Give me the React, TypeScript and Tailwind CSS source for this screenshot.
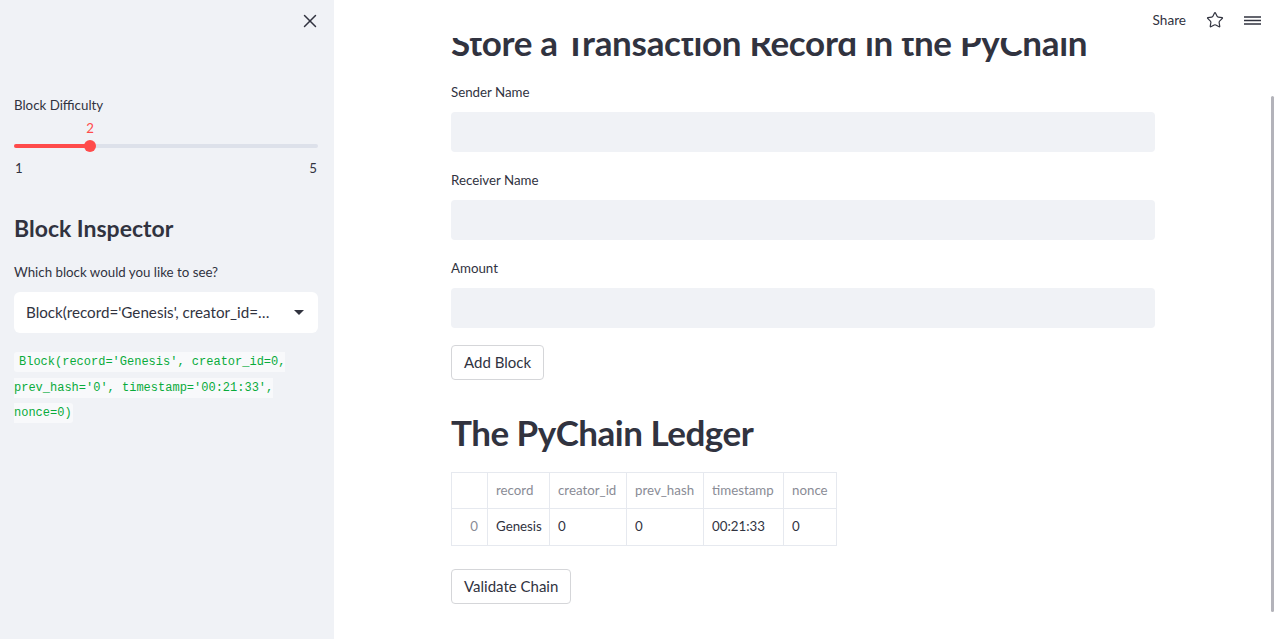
import { X, Star } from 'lucide-react';

const COLUMNS = [
  { key: 'record', w: 'w-[62px]' },
  { key: 'creator_id', w: 'w-[77px]' },
  { key: 'prev_hash', w: 'w-[77px]' },
  { key: 'timestamp', w: 'w-[80px]' },
  { key: 'nonce', w: 'w-[52px]' },
];

const ROW: Record<string, string> = {
  record: 'Genesis',
  creator_id: '0',
  prev_hash: '0',
  timestamp: '00:21:33',
  nonce: '0',
};

const TextField = ({ label }: { label: string }) => (
  <div className="flex flex-col">
    <label className="text-[13.3px] leading-5 text-[#31333f]">{label}</label>
    <div className="mt-[10px] h-10 w-full rounded-[4px] bg-[#f0f2f6]" />
  </div>
);

const Sidebar = () => (
  <aside className="w-[334px] shrink-0 bg-[#f0f2f6] pl-[14px] pr-4">
    {/* close */}
    <div className="flex h-[42px] items-center justify-end pr-0">
      <X size={22} strokeWidth={1.6} className="mr-[-3px] text-[#31333f]" />
    </div>

    {/* Block difficulty slider */}
    <div className="mt-[53px] text-[13.3px] leading-5 text-[#31333f]">Block Difficulty</div>
    <div className="relative mt-[29px] h-1 w-full rounded-full bg-[#dde1ea]">
      <div className="h-1 w-[76px] rounded-full bg-[#ff4b4b]" />
      <span className="absolute left-[70px] top-[-26px] w-3 text-center text-[13.3px] leading-5 text-[#ff4b4b]">2</span>
      <span className="absolute left-[70px] top-[-4px] h-3 w-3 rounded-full bg-[#ff4b4b]" />
    </div>
    <div className="mt-[10px] flex justify-between px-[1px] text-[13.3px] leading-5 text-[#31333f]">
      <span>1</span>
      <span>5</span>
    </div>

    {/* Block inspector */}
    <h2 className="mt-[36px] text-[23px] font-bold leading-[28px] text-[#31333f]">Block Inspector</h2>
    <div className="mt-[20px] text-[13.3px] leading-5 text-[#31333f]">Which block would you like to see?</div>
    <div className="mt-[10px] flex h-[41px] items-center justify-between rounded-[6px] bg-white pl-3 pr-[14px]">
      <span className="truncate text-[15.2px] text-[#31333f]">Block(record='Genesis', creator_id=0, prev_hash='0', timestamp='00:21:33', nonce=0)</span>
      <svg width="10" height="5" viewBox="0 0 10 5" className="ml-[18px] shrink-0">
        <path d="M0 0h10L5 5z" fill="#31333f" />
      </svg>
    </div>
    <p className="mt-[17px] font-['Liberation_Mono',monospace] text-[12px] leading-[25.5px]">
      <code className="rounded-[3px] bg-[#f8f9fb] py-[3px] pl-[5px] pr-[1px] text-[#09ab3b]">
        Block(record='Genesis', creator_id=0, prev_hash='0', timestamp='00:21:33', nonce=0)
      </code>
    </p>
  </aside>
);

const Ledger = () => (
  <div className="flex w-[386px] flex-col border border-[#e6e9ef] text-[13.3px]">
    <div className="flex h-[36px] border-b border-[#e6e9ef]">
      <div className="w-[36px] border-r border-[#e6e9ef]" />
      {COLUMNS.map((c) => (
        <div key={c.key} className={`${c.w} flex items-center border-r border-[#e6e9ef] px-2 text-[#8a8c96] last:border-r-0`}>
          {c.key}
        </div>
      ))}
    </div>
    <div className="flex h-[36px]">
      <div className="flex w-[36px] items-center justify-end border-r border-[#e6e9ef] pr-[9px] text-[#8a8c96]">0</div>
      {COLUMNS.map((c) => (
        <div key={c.key} className={`${c.w} flex items-center border-r border-[#e6e9ef] px-2 text-[#31333f] last:border-r-0`}>
          {ROW[c.key]}
        </div>
      ))}
    </div>
  </div>
);

const Button = ({ children }: { children: string }) => (
  <button className="h-[35px] rounded-[4px] border border-[#d5d6d9] bg-white px-3 text-[15px] text-[#31333f]">
    {children}
  </button>
);

export default function App() {
  return (
    <div className="flex h-[639px] w-[1275px] overflow-hidden bg-white font-['Lato',sans-serif] text-[#31333f]">
      <Sidebar />

      <main className="relative flex-1 overflow-hidden">
        {/* top bar */}
        <header className="absolute inset-x-0 top-0 z-10 flex h-[38px] items-center justify-end gap-[20px] bg-white pr-[12px] pt-[2px]">
          <span className="text-[13.6px]">Share</span>
          <Star size={18} strokeWidth={1.6} />
          <svg width="17" height="9" viewBox="0 0 17 9" className="mr-[2px]">
            <path d="M0 1h17M0 4.5h17M0 8h17" stroke="#31333f" strokeWidth="1.6" />
          </svg>
        </header>

        {/* overlay scrollbar */}
        <div className="absolute right-[1px] top-[96px] z-10 h-[516px] w-[3px] rounded-full bg-[#b3b3ba]" />

        <div className="flex w-[821px] flex-col pl-[117px]">
          <h2 className="mt-[21px] text-[35px] font-bold leading-[43px] tracking-[-0.3px]">Store a Transaction Record in the PyChain</h2>

          <div className="mt-[18px] flex flex-col gap-[18px]">
            <TextField label="Sender Name" />
            <TextField label="Receiver Name" />
            <TextField label="Amount" />
          </div>

          <div className="mt-[17px]">
            <Button>Add Block</Button>
          </div>

          <h2 className="mt-[31px] text-[35px] font-bold leading-[43px] tracking-[-0.5px]">The PyChain Ledger</h2>

          <div className="mt-[18px]">
            <Ledger />
          </div>

          <div className="mt-[23px]">
            <Button>Validate Chain</Button>
          </div>
        </div>
      </main>
    </div>
  );
}
